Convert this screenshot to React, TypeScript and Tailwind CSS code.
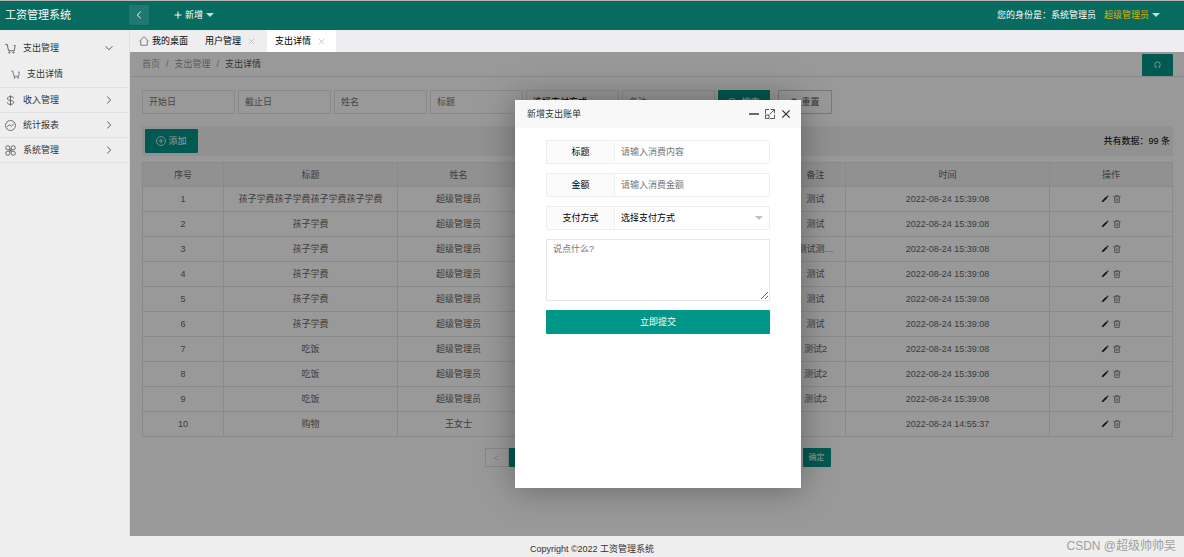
import React from 'react';

type IconProps = { className?: string };

const CartIcon = ({ className }: IconProps) => (
  <svg className={className} viewBox="0 0 20 20" fill="none" stroke="currentColor" strokeWidth="1.6">
    <path d="M0.5 2.5H4L6.5 14H17L18.5 4.5H16" />
    <circle cx="8" cy="17.3" r="1.2" />
    <circle cx="15.5" cy="17.3" r="1.2" />
  </svg>
);

const DollarIcon = ({ className }: IconProps) => (
  <svg className={className} viewBox="0 0 20 20" fill="none" stroke="currentColor" strokeWidth="1.6">
    <path d="M15.5 6.2C15.5 4 13.3 3 10 3S4.5 4.2 4.5 6.5 7 9.6 10 10s5.8 1 5.8 3.5S13.3 17 10 17s-5.8-1.2-5.8-3.6M10 0.5v19" />
  </svg>
);

const ChartIcon = ({ className }: IconProps) => (
  <svg className={className} viewBox="0 0 20 20" fill="none" stroke="currentColor" strokeWidth="1.5">
    <circle cx="10" cy="10" r="9" />
    <path d="M4 12.5L8 8.5L11.5 11.5L16 7" />
  </svg>
);

const CommandIcon = ({ className }: IconProps) => (
  <svg className={className} viewBox="0 0 20 20" fill="none" stroke="currentColor" strokeWidth="1.6">
    <path d="M8.7 8.7H5A3.7 3.7 0 1 1 8.7 5zM11.3 8.7H15A3.7 3.7 0 1 0 11.3 5zM8.7 11.3H5A3.7 3.7 0 1 0 8.7 15zM11.3 11.3H15A3.7 3.7 0 1 1 11.3 15z" />
    <path d="M8.7 10h2.6M10 8.7v2.6" />
  </svg>
);

const HomeIcon = ({ className }: IconProps) => (
  <svg className={className} viewBox="0 0 20 20" fill="none" stroke="currentColor" strokeWidth="1.5">
    <path d="M0.8 10.5L10 1.5L19.2 10.5M3.5 8.5V18.5H16.5V8.5" />
  </svg>
);

const ChevronIcon = ({ className }: IconProps) => (
  <svg className={className} viewBox="0 0 10 10" fill="none" stroke="currentColor" strokeWidth="1.2">
    <path d="M2.8 0.8L7.2 5L2.8 9.2" />
  </svg>
);

const CloseIcon = ({ className }: IconProps) => (
  <svg className={className} viewBox="0 0 10 10" fill="none" stroke="currentColor" strokeWidth="1.2">
    <path d="M1.3 1.3L8.7 8.7M8.7 1.3L1.3 8.7" />
  </svg>
);

const CaretIcon = ({ className }: IconProps) => (
  <svg className={className} viewBox="0 0 8 4" fill="currentColor">
    <path d="M0 0H8L4 4Z" />
  </svg>
);

const PlusCircleIcon = ({ className }: IconProps) => (
  <svg className={className} viewBox="0 0 20 20" fill="none" stroke="currentColor" strokeWidth="1.5">
    <circle cx="10" cy="10" r="9" />
    <path d="M10 5V15M5 10H15" />
  </svg>
);

const SearchIcon = ({ className }: IconProps) => (
  <svg className={className} viewBox="0 0 20 20" fill="none" stroke="currentColor" strokeWidth="1.8">
    <circle cx="9" cy="9" r="8" />
    <path d="M15 15L19 19" />
  </svg>
);

const RefreshIcon = ({ className }: IconProps) => (
  <svg className={className} viewBox="0 0 10 10" fill="none" stroke="currentColor" strokeWidth="1.3">
    <path d="M1 8.6H3.4C1.8 7.6 1.2 6.4 1.2 5A3.8 3.8 0 0 1 8.8 5C8.8 6.4 8.2 7.6 6.6 8.6H9" />
  </svg>
);

const EditIcon = ({ className }: IconProps) => (
  <svg className={className} viewBox="0 0 10 10" fill="currentColor">
    <path d="M0.8 9.2L1.6 6.8L6.6 1.8L8.2 3.4L3.2 8.4ZM7.1 1.3L7.8 0.6C8.4 0.2 9.8 1.6 9.4 2.2L8.7 2.9Z" />
  </svg>
);

const TrashIcon = ({ className }: IconProps) => (
  <svg className={className} viewBox="0 0 10 10" fill="none" stroke="currentColor" strokeWidth="0.9">
    <path d="M0.4 2.2H9.6M3.2 2V0.8H6.8V2M1.8 2.4L2.2 9.3H7.8L8.2 2.4M4 4V7.6M6 4V7.6" />
  </svg>
);

const MaximizeIcon = ({ className }: IconProps) => (
  <svg className={className} viewBox="0 0 10 10" fill="none" stroke="currentColor" strokeWidth="0.8">
    <path d="M4.2 0.5H0.5V4.8M5.2 9.5H9.5V5.8M0.5 6V9.5H4V6ZM5.8 0.5H9.5V4.2M9.2 0.8L4.6 5.4" />
  </svg>
);

const menus = [
  { name: '收入管理', Icon: DollarIcon },
  { name: '统计报表', Icon: ChartIcon },
  { name: '系统管理', Icon: CommandIcon },
];

const rows = [
  { title: '孩子学费孩子学费孩子学费孩子学费', user: '超级管理员', remark: '测试', time: '2022-08-24 15:39:08' },
  { title: '孩子学费', user: '超级管理员', remark: '测试', time: '2022-08-24 15:39:08' },
  { title: '孩子学费', user: '超级管理员', remark: '测试测…', time: '2022-08-24 15:39:08' },
  { title: '孩子学费', user: '超级管理员', remark: '测试', time: '2022-08-24 15:39:08' },
  { title: '孩子学费', user: '超级管理员', remark: '测试', time: '2022-08-24 15:39:08' },
  { title: '孩子学费', user: '超级管理员', remark: '测试', time: '2022-08-24 15:39:08' },
  { title: '吃饭', user: '超级管理员', remark: '测试2', time: '2022-08-24 15:39:08' },
  { title: '吃饭', user: '超级管理员', remark: '测试2', time: '2022-08-24 15:39:08' },
  { title: '吃饭', user: '超级管理员', remark: '测试2', time: '2022-08-24 15:39:08' },
  { title: '购物', user: '王女士', remark: '', time: '2022-08-24 14:55:37' },
];

const Header = () => (
  <header className="flex h-[30px] items-center border-t border-[#b5b5b5] bg-[#076b60] pb-px text-white">
    <a href="#" className="w-[129px] shrink-0 pl-[5px] text-[11px] leading-4">工资管理系统</a>
    <button aria-label="收起菜单" className="flex size-5 items-center justify-center rounded-[2px] bg-[#20796f]">
      <ChevronIcon className="size-2 rotate-180" />
    </button>
    <button className="ml-[25px] flex items-center gap-[3px]">
      <svg className="size-2" viewBox="0 0 8 8" stroke="currentColor"><path d="M4 0.5V7.5M0.5 4H7.5" /></svg>
      <span>新增</span>
      <CaretIcon className="h-1 w-2 text-[#c6dedb]" />
    </button>
    <div className="ml-auto flex items-center gap-2 pr-6">
      <span>您的身份是：系统管理员</span>
      <button className="flex items-center gap-[3px] text-[#dcae0c]">
        超级管理员
        <CaretIcon className="h-1 w-2 text-[#c6dedb]" />
      </button>
    </div>
  </header>
);

const Sidebar = () => (
  <nav className="w-[130px] shrink-0 border-r border-[#e2e2e2] bg-[#eeeeee] pt-[5px] text-[#333333]">
    <a href="#" className="flex h-[26px] items-center pr-4 pl-[5px]">
      <CartIcon className="size-[11px] text-[#555555]" />
      <span className="ml-[7px]">支出管理</span>
      <ChevronIcon className="ml-auto size-2 rotate-90 text-[#555555]" />
    </a>
    <a href="#" className="flex h-[27px] items-center border-b border-[#e0e0e0] pl-[11px]">
      <CartIcon className="size-[9px] text-[#555555]" />
      <span className="ml-[7px]">支出详情</span>
    </a>
    {menus.map(({ name, Icon }) => (
      <a key={name} href="#" className="flex h-[25px] items-center border-b border-[#e0e0e0] pr-4 pl-[5px]">
        <Icon className="size-[11px] text-[#555555]" />
        <span className="ml-[7px]">{name}</span>
        <ChevronIcon className="ml-auto size-2 text-[#555555]" />
      </a>
    ))}
  </nav>
);

const Tabs = () => (
  <div className="flex h-[22px] bg-[#eeeef0] text-black">
    <a href="#" className="flex items-center gap-[3px] px-[9px]">
      <HomeIcon className="size-[10px] text-[#555555]" />
      我的桌面
    </a>
    <a href="#" className="flex items-center gap-[7px] pr-3 pl-2">
      用户管理
      <CloseIcon className="size-[7px] text-[#bbbbbb]" />
    </a>
    <a href="#" className="flex items-center gap-[7px] bg-white pr-[11px] pl-2">
      支出详情
      <CloseIcon className="size-[7px] text-[#bbbbbb]" />
    </a>
  </div>
);

const searchInput = 'h-6 w-[93px] border border-[#e6e6e6] bg-white px-[6px] placeholder:text-[#757575]';

const SearchForm = () => (
  <form className="mt-[13px] flex gap-[3px]">
    <input aria-label="开始日" placeholder="开始日" className={searchInput} />
    <input aria-label="截止日" placeholder="截止日" className={searchInput} />
    <input aria-label="姓名" placeholder="姓名" className={searchInput} />
    <input aria-label="标题" placeholder="标题" className={searchInput} />
    <div className="relative">
      <select aria-label="支付方式" className="h-6 w-[93px] appearance-none border border-[#e6e6e6] bg-white px-[6px] text-black">
        <option>选择支付方式</option>
      </select>
      <CaretIcon className="pointer-events-none absolute top-[10px] right-[6px] h-1 w-2 text-[#c2c2c2]" />
    </div>
    <input aria-label="备注" placeholder="备注" className={searchInput} />
    <button type="button" className="flex h-6 w-[52px] items-center justify-center gap-1 rounded-[1px] bg-[#009688] text-white">
      <SearchIcon className="size-[9px]" />
      搜索
    </button>
    <button type="reset" className="ml-[5px] flex h-6 w-[54px] items-center justify-center gap-[3px] rounded-[1px] border border-[#c9c9c9] bg-white text-[#555555]">
      <RefreshIcon className="size-2" />
      重置
    </button>
  </form>
);

const cell = 'border border-[#e6e6e6] p-0 text-center font-normal';

const ExpenseTable = () => (
  <table className="mt-[6px] w-full table-fixed border-collapse text-[#666666]">
    <thead className="bg-[#f2f2f2]">
      <tr className="h-6">
        <th className={`${cell} w-[81px]`}>序号</th>
        <th className={`${cell} w-[174px]`}>标题</th>
        <th className={`${cell} w-[122px]`}>姓名</th>
        <th className={cell}>金额</th>
        <th className={cell}>支付方式</th>
        <th className={`${cell} w-[60px]`}>备注</th>
        <th className={`${cell} w-[204px]`}>时间</th>
        <th className={`${cell} w-[123px]`}>操作</th>
      </tr>
    </thead>
    <tbody>
      {rows.map((row, i) => (
        <tr key={i} className="h-[25px]">
          <td className={cell}>{i + 1}</td>
          <td className={cell}>{row.title}</td>
          <td className={cell}>{row.user}</td>
          <td className={cell}></td>
          <td className={cell}></td>
          <td className={cell}>{row.remark}</td>
          <td className={cell}>{row.time}</td>
          <td className={cell}>
            <div className="flex items-center justify-center gap-1">
              <button aria-label="编辑"><EditIcon className="size-2 text-[#222222]" /></button>
              <button aria-label="删除"><TrashIcon className="size-2" /></button>
            </div>
          </td>
        </tr>
      ))}
    </tbody>
  </table>
);

const Pagination = () => (
  <div className="mx-auto mt-[11px] flex h-[19px] w-[346px]">
    <button aria-label="上一页" className="w-6 border border-[#e2e2e2] text-[#d2d2d2]">&lt;</button>
    <button className="w-6 bg-[#009688] text-white">1</button>
    <button className="ml-auto w-7 rounded-[1px] bg-[#009688] text-[8px] text-white">确定</button>
  </div>
);

const fieldLabel = 'flex w-[68px] shrink-0 items-center justify-center border-r border-[#eeeeee] bg-[#fbfbfb] text-black';
const field = 'flex h-6 rounded-[1px] border border-[#eeeeee]';

const ExpenseDialog = () => (
  <div role="dialog" aria-label="新增支出账单" className="flex h-4/5 w-[286px] flex-col bg-white shadow-[0_0_33px_rgba(0,0,0,0.35)]">
    <div className="flex h-7 items-center bg-[#f8f8f8] px-[10px] text-[#333333]">
      <span className="pl-0.5">新增支出账单</span>
      <div className="ml-auto flex items-center gap-[6px] text-[#2e2d3c]">
        <button aria-label="最小化" className="flex size-[10px] items-center"><span className="h-[2px] w-full bg-[#6b6a76]"></span></button>
        <button aria-label="最大化"><MaximizeIcon className="size-[10px]" /></button>
        <button aria-label="关闭"><CloseIcon className="size-[10px]" /></button>
      </div>
    </div>
    <form className="flex flex-col gap-[9px] px-[31px] pt-3">
      <div className={field}>
        <label htmlFor="title" className={fieldLabel}>标题</label>
        <input id="title" placeholder="请输入消费内容" className="w-full min-w-0 px-[6px] placeholder:text-[#757575]" />
      </div>
      <div className={field}>
        <label htmlFor="money" className={fieldLabel}>金额</label>
        <input id="money" placeholder="请输入消费金额" className="w-full min-w-0 px-[6px] placeholder:text-[#757575]" />
      </div>
      <div className={`${field} relative`}>
        <label htmlFor="pay" className={fieldLabel}>支付方式</label>
        <select id="pay" className="w-full min-w-0 appearance-none px-[6px] text-black">
          <option>选择支付方式</option>
        </select>
        <CaretIcon className="pointer-events-none absolute top-[9px] right-[6px] h-1 w-2 text-[#c2c2c2]" />
      </div>
      <textarea aria-label="备注" placeholder="说点什么?" className="h-[62px] resize rounded-[1px] border border-[#e6e6e6] px-[6px] py-[3px] placeholder:text-[#757575]" />
      <button type="button" className="h-6 rounded-[1px] bg-[#009688] text-white">立即提交</button>
    </form>
  </div>
);

export default function App() {
  return (
    <div className="flex min-h-screen flex-col bg-white font-['Liberation_Sans','Noto_Sans_CJK_SC',sans-serif] text-[9px] leading-3">
      <Header />
      <div className="flex flex-1">
        <Sidebar />
        <div className="flex min-w-0 flex-1 flex-col">
          <Tabs />
          <main className="relative flex-1 overflow-hidden">
            <div className="flex h-[25px] items-center border-b border-[#e5e5e5] pr-[11px] pl-3 text-[#999999]">
              <div className="flex gap-[6px]">
                <a href="#">首页</a>
                <span>/</span>
                <a href="#">支出管理</a>
                <span>/</span>
                <span className="text-[#555555]">支出详情</span>
              </div>
              <button aria-label="刷新" className="mt-px ml-auto flex h-[22px] w-[31px] items-center justify-center rounded-[1px] bg-[#009688] text-white">
                <RefreshIcon className="size-[7px]" />
              </button>
            </div>
            <div className="pr-[11px] pl-3">
              <SearchForm />
              <div className="mt-3 flex h-[30px] items-center bg-[#f2f2f2] px-[3px] text-black">
                <button className="flex h-6 w-[53px] items-center justify-center gap-[2px] rounded-[1px] bg-[#009688] text-white">
                  <PlusCircleIcon className="size-[10px]" />
                  添加
                </button>
                <span className="ml-auto">共有数据：99 条</span>
              </div>
              <ExpenseTable />
              <Pagination />
            </div>
            <div className="absolute inset-0 flex items-center justify-center bg-black/40 pl-0.5">
              <ExpenseDialog />
            </div>
          </main>
        </div>
      </div>
      <footer className="relative flex h-[21px] items-center justify-center bg-[#eeeeee] pt-1 text-[#333333]">
        Copyright ©2022 工资管理系统
        <span className="absolute right-2 bottom-[3px] text-[12px] leading-4 text-[#a0a0a0]">CSDN @超级帅帅吴</span>
      </footer>
    </div>
  );
}
